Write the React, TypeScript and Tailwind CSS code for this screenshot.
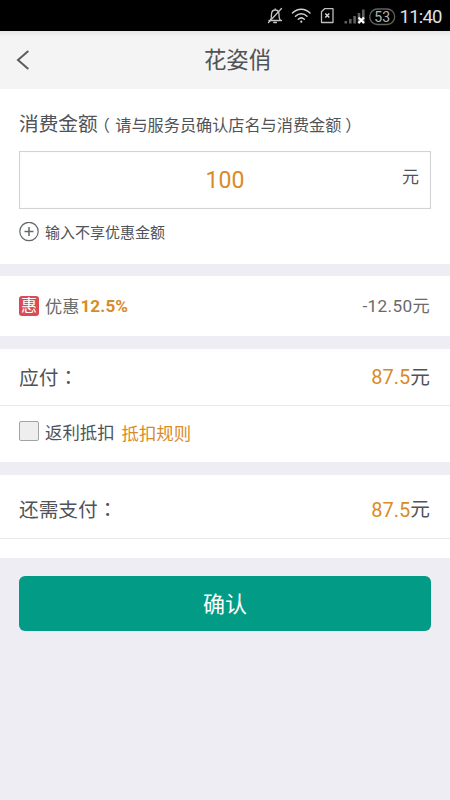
import React from "react";

type RowProps = { label: string; amount: string; className: string }

const StatusBar = () => {
  return (
    <div className="flex h-[31px] items-center bg-black pl-[267px] text-[#d8d8d8]">
      <svg width="183" height="31" viewBox="267 0 183 31" fill="none" className="shrink-0">
        {/* muted bell */}
        <g stroke="#c4c4c4" strokeWidth="1.3" strokeLinecap="round">
          <path d="M269 20.500h12.500M270.500 20c1-1.300 1-3 1-5.500c0-3 1.300-4.500 3.700-4.500s3.800 1.500 3.800 4.500c0 2.500 0 4.200 1.200 5.500M275.200 10V8.800M273.800 22.500h2.600" />
          <path d="M268.500 22.500L281.500 8.500" />
        </g>
        {/* wifi */}
        <g stroke="#d0d0d0" strokeWidth="1.5" strokeLinecap="round">
          <path d="M292.500 13c5-5 12.500-5 17.500 0" />
          <path d="M295.500 16.200c3.300-3.200 8.200-3.200 11.500 0" />
          <path d="M298.300 19.200c1.900-1.700 4.100-1.700 6 0" />
          <circle cx="301.300" cy="21.700" r="1.100" fill="#d0d0d0" stroke="none" />
        </g>
        {/* missing sim card */}
        <path d="M324.500 8.700h8.500v13.800h-11.500v-10.800z" stroke="#bdbdbd" strokeWidth="1.300" strokeLinejoin="round" />
        <path d="M325.300 13.500l4 4m0-4l-4 4" stroke="#d8d8d8" strokeWidth="1.400" />
        {/* signal bars */}
        <g fill="#5f5f5f">
          <path d="M344.500 21h2.600v2.500h-2.600zM349 19h2.600v4.500h-2.600zM353.300 16h2.600v7.500h-2.600zM357.700 13h2.600v10.500h-2.600zM362 9.500h2.600v14h-2.600z" />
        </g>
        <path d="M358.500 17.500l5.500 5.500m0-5.500l-5.500 5.500" stroke="#fff" strokeWidth="2.200" />
        <rect x="369.700" y="9" width="25" height="15.500" rx="7.700" stroke="#606060" strokeWidth="1.300" />
        <text x="382.200" y="22" textAnchor="middle" fontSize="14" fill="#b5b5b5" fontFamily="Roboto, sans-serif">53</text>
        <text x="399.500" y="23.200" fontSize="18.500" fill="#e2e2e2" textLength="43" fontFamily="Roboto, sans-serif">11:40</text>
      </svg>
    </div>
  );
};

const AmountRow = ({ label, amount, className }: RowProps) => {
  return (
    <div className={`flex items-center justify-between border-b border-[#e9e9ec] pr-5 pl-[19px] text-[19.7px] ${className}`}>
      <span>
        {label}
        <span lang="zh-TW" className="font-['Noto_Sans_CJK_TC',sans-serif]">：</span>
      </span>
      <span className="flex items-center">
        <span className="pb-px text-[20px] text-[#d98b27]">{amount}</span>元
      </span>
    </div>
  );
};

const App = () => {
  return (
    <div className="flex h-[800px] w-[450px] flex-col overflow-hidden bg-[#eeedf4] font-[Roboto,'Noto_Sans_CJK_SC',sans-serif] leading-none text-[#505357]" lang="zh-CN">
      <StatusBar />
      <header className="flex h-[58px] items-center bg-linear-to-b from-[#e6e6e6] to-[#f4f4f4] to-[6px] px-4">
        <svg width="14" height="20" viewBox="0 0 14 20" fill="none" stroke="#5c5c5c" strokeWidth="2">
          <path d="M12.300 1L2 10l10.300 9" />
        </svg>
        <h1 className="flex-1 pt-px pl-[11px] text-center text-[22.4px]">花姿俏</h1>
      </header>

      <section className="h-[175px] bg-white px-[19px] pt-[26px]">
        <div className="flex h-5 items-center whitespace-nowrap">
          <span className="text-[19.7px]">消费金额</span>
          <span className="flex pt-[2px] pl-1 text-[16.15px]">
            <span className="mr-[5.5px] [font-feature-settings:'halt']">（</span>
            <span>请与服务员确认店名与消费金额</span>
            <span className="ml-1 [font-feature-settings:'halt']">）</span>
          </span>
        </div>
        <div className="mt-4 grid h-[58px] grid-cols-3 items-center border-[1.5px] border-[#d2d2d2] px-[11px] shadow-[inset_0_0_1px_#ddd]">
          <span />
          <span className="text-center text-[23px] text-[#d98b27]">100</span>
          <span className="pb-[5px] text-right text-[17px]">元</span>
        </div>
        <div className="mt-[13px] flex items-center gap-[6px]">
          <svg width="20" height="20" viewBox="0 0 20 20" fill="none" stroke="#66696b" strokeWidth="1.200">
            <circle cx="10" cy="9.500" r="9.200" />
            <path d="M10 5v9M5.500 9.500h9" strokeWidth="1.500" />
          </svg>
          <span className="pt-[2px] text-[15px]">输入不享优惠金额</span>
        </div>
      </section>

      <section className="mt-3 flex h-[60px] items-center bg-white pr-5 pl-[19px] text-[17.2px] text-[#6a6a6a]">
        <span className="flex size-5 items-center justify-center rounded-[3px] bg-[#dc4b55] text-base text-white">惠</span>
        <span className="ml-[6px] pt-[3px]">优惠</span>
        <span className="ml-px pt-px font-bold tracking-[0.1px] text-[#d98b27]">12.5%</span>
        <span className="ml-auto pt-[2px] tracking-[0.35px]">-12.50元</span>
      </section>

      <section className="mt-[13px] h-[113px] bg-white">
        <AmountRow label="应付" amount="87.5" className="h-[57px] pt-px" />
        <div className="flex h-[53px] items-center px-[19px] text-[17.4px]">
          <span className="mb-[3px] size-5 rounded-[2px] border-[1.5px] border-[#a3a3a3] bg-[#eee]" />
          <span className="ml-[6px] pt-[2px]">返利抵扣</span>
          <span className="ml-[7px] pt-1 text-[#d98b27]">抵扣规则</span>
        </div>
      </section>

      <section className="mt-[13px] h-[83px] bg-white">
        <AmountRow label="还需支付" amount="87.5" className="h-16 pt-[7px]" />
      </section>

      <button className="mx-[19px] mt-[18px] h-[55px] rounded-md bg-[#029c86] pt-[2px] text-[22px] text-white">
        确认
      </button>
    </div>
  );
};

export default App;
